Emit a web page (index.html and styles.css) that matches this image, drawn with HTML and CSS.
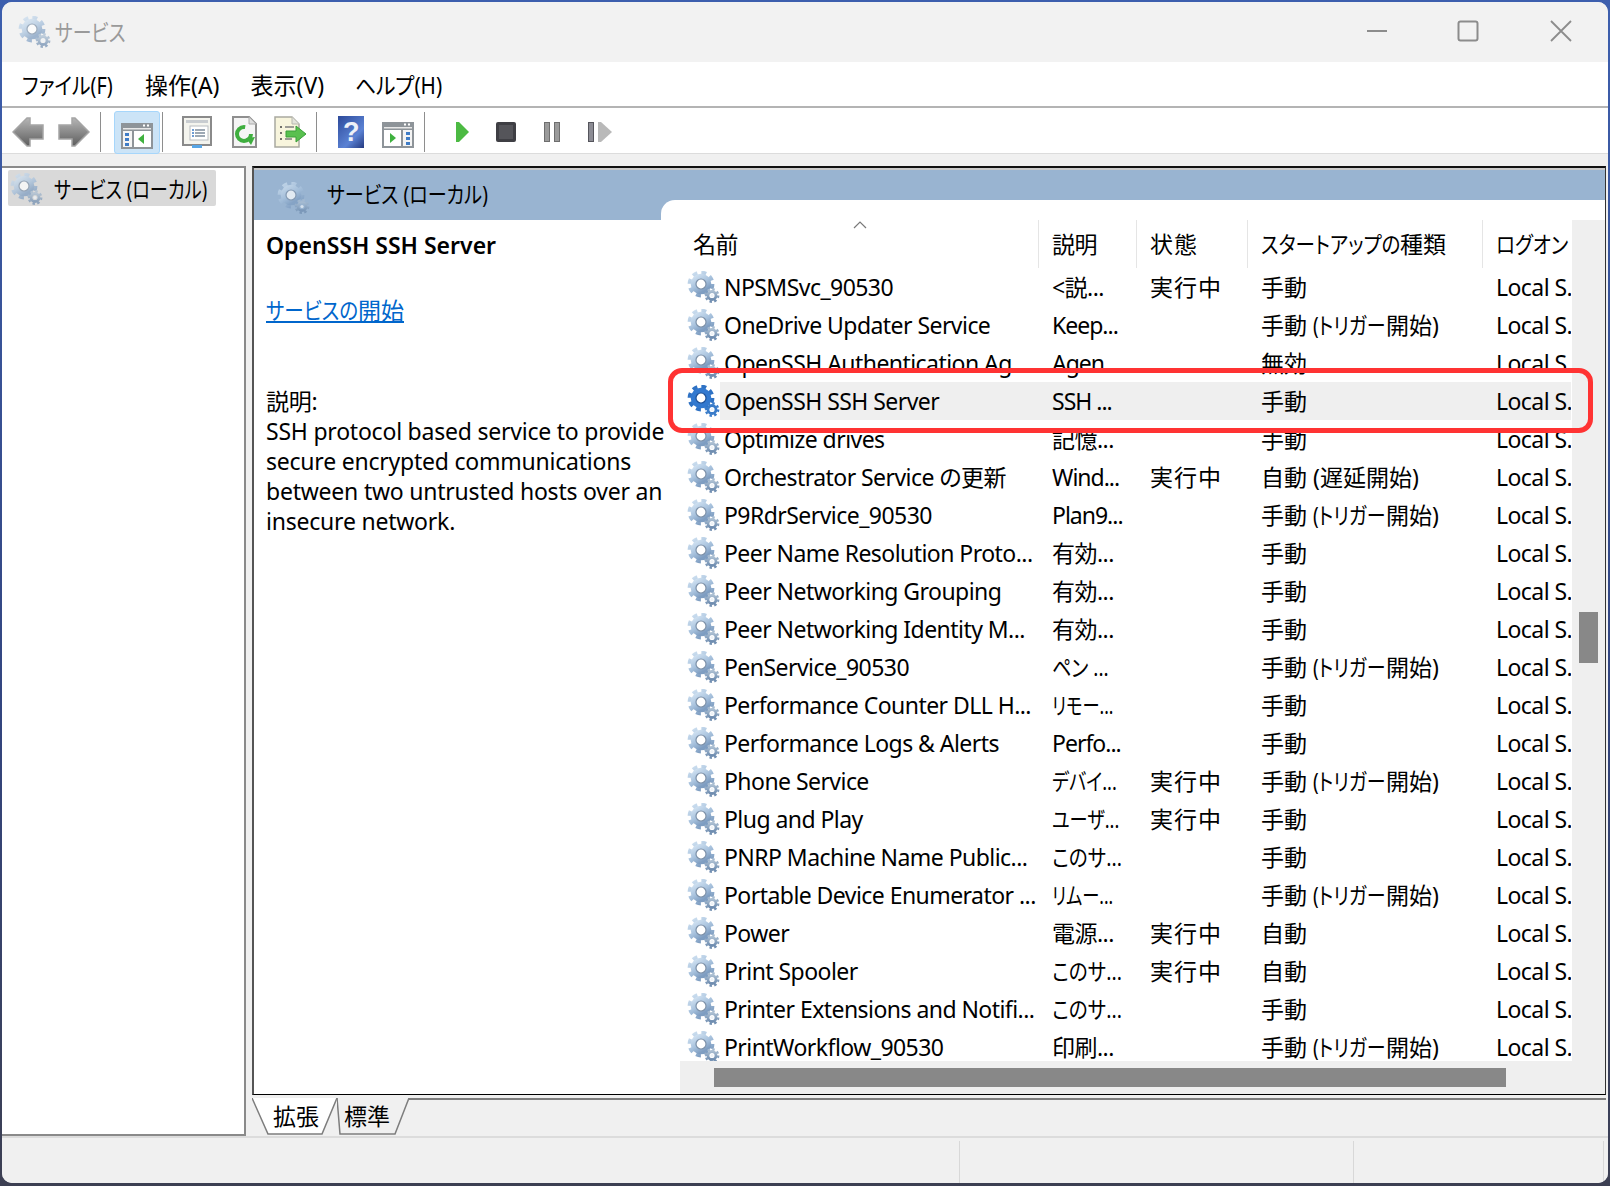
FILE: index.html
```html
<!DOCTYPE html>
<html lang="ja">
<head>
<meta charset="utf-8">
<title>サービス</title>
<link rel="stylesheet" href="styles.css">
</head>
<body>
<svg class="defs" aria-hidden="true">
  <defs>
    <linearGradient id="gearFill" x1="0" y1="0" x2="0.6" y2="1"><stop offset="0" stop-color="#d0e1f1"/><stop offset="0.55" stop-color="#a9c3de"/><stop offset="1" stop-color="#7e9dc1"/></linearGradient>
    <linearGradient id="gearSmall" x1="0" y1="0" x2="0" y2="1"><stop offset="0" stop-color="#a9bdd1"/><stop offset="1" stop-color="#6f8db0"/></linearGradient>
    <linearGradient id="arrowFill" x1="0" y1="0" x2="0" y2="1"><stop offset="0" stop-color="#b5b5b5"/><stop offset="0.5" stop-color="#8a8a8a"/><stop offset="1" stop-color="#5d5d5d"/></linearGradient>
    <symbol id="gear" viewBox="0 0 33 32">
      <circle cx="14" cy="13" r="11.2" fill="none" stroke="url(#gearFill)" stroke-width="4.4" stroke-dasharray="4.8 4"/>
      <circle cx="14" cy="13" r="7.6" fill="none" stroke="url(#gearFill)" stroke-width="5.4"/>
      <circle cx="14" cy="13" r="5" fill="#fff" stroke="#7c90a8" stroke-width="1.2"/>
      <circle cx="25" cy="24.5" r="6.2" fill="none" stroke="url(#gearSmall)" stroke-width="2.4" stroke-dasharray="2.4 2.4"/>
      <circle cx="25" cy="24.5" r="4" fill="none" stroke="url(#gearSmall)" stroke-width="2.8"/>
      <circle cx="25" cy="24.5" r="1.6" fill="#eef3f8"/>
    </symbol>
    <symbol id="gear-sel" viewBox="0 0 33 32">
      <circle cx="14" cy="13" r="11.2" fill="none" stroke="#2f72c4" stroke-width="4.4" stroke-dasharray="4.8 4"/>
      <circle cx="14" cy="13" r="7.6" fill="none" stroke="#3379cf" stroke-width="5.4"/>
      <circle cx="14" cy="13" r="5" fill="#fff" stroke="#1c4f96" stroke-width="1.2"/>
      <circle cx="25" cy="24.5" r="6.2" fill="none" stroke="#3a7cc9" stroke-width="2.4" stroke-dasharray="2.4 2.4"/>
      <circle cx="25" cy="24.5" r="4" fill="none" stroke="#3a7cc9" stroke-width="2.8"/>
      <circle cx="25" cy="24.5" r="1.6" fill="#eef3f8"/>
    </symbol>
  </defs>
</svg>

<div class="window">
  <header class="titlebar">
    <svg class="gear gear-pale title-icon"><use href="#gear"/></svg>
    <span class="title"><span class="sq sq82">サービス</span></span>
    <div class="controls">
      <svg class="ctl" viewBox="0 0 22 22"><path d="M1 11H21" stroke="#8c8c8c" stroke-width="2"/></svg>
      <svg class="ctl ctl-max" viewBox="0 0 22 22"><rect x="1.5" y="1.5" width="19" height="19" rx="2" fill="none" stroke="#8c8c8c" stroke-width="2"/></svg>
      <svg class="ctl ctl-close" viewBox="0 0 22 22"><path d="M1 1L21 21M21 1L1 21" stroke="#8c8c8c" stroke-width="1.8"/></svg>
    </div>
  </header>

  <nav class="menubar">
    <span class="menu menu-file"><span class="sq sq86">ファイル(F)</span></span>
    <span class="menu">操作(A)</span>
    <span class="menu">表示(V)</span>
    <span class="menu"><span class="sq sq90">ヘルプ(H)</span></span>
  </nav>

  <div class="toolbar">
    <svg class="tool t-back" viewBox="0 0 32 30"><path d="M1 15L15 1H18V8H31V22H18V29H15Z" fill="url(#arrowFill)" stroke="#a5a5a5" stroke-width="1.5"/></svg>
    <svg class="tool t-fwd" viewBox="0 0 32 30"><path d="M31 15L17 1H14V8H1V22H14V29H17Z" fill="url(#arrowFill)" stroke="#a5a5a5" stroke-width="1.5"/></svg>
    <span class="sep s1"></span>
    <button class="tool-active">
      <svg class="tool-pane" viewBox="0 0 32 26"><rect width="32" height="26" fill="#8e9499"/><rect x="2" y="5" width="28" height="1.5" fill="#e8e8e8"/><rect x="22" y="1.5" width="2" height="2" fill="#fff"/><rect x="26" y="1.5" width="2" height="2" fill="#fff"/><rect x="2" y="8" width="9" height="16" fill="#f4f4f4"/><rect x="13" y="8" width="17" height="16" fill="#fff"/><rect x="4" y="10" width="4" height="3" fill="#3f7cc6"/><rect x="4" y="15" width="4" height="3" fill="#3f7cc6"/><rect x="4" y="20" width="4" height="3" fill="#3f7cc6"/><path d="M23 11V21L17 16Z" fill="#3fb13f"/></svg>
    </button>
    <span class="sep s2"></span>
    <svg class="tool t-props" viewBox="0 0 30 32"><rect x="1" y="1" width="28" height="28" fill="#f4f4ee" stroke="#8a8a8a" stroke-width="2"/><rect x="4" y="4" width="22" height="3" fill="#c8ccd0"/><rect x="8" y="10" width="18" height="14" fill="#fff" stroke="#b8bcc0"/><path d="M13 14H23M13 17H23M13 20H23" stroke="#7d8c9c" stroke-width="1.5"/><path d="M10 14h2M10 17h2M10 20h2" stroke="#3f7cc6" stroke-width="1.5"/><rect x="10" y="29" width="10" height="3" fill="#58a6e6"/></svg>
    <svg class="tool t-refresh" viewBox="0 0 25 32"><path d="M1 1H17L24 8V31H1Z" fill="#f5f5f5" stroke="#8f8f8f" stroke-width="2"/><path d="M17 1V8H24" fill="#ddd" stroke="#aaa"/><circle cx="12" cy="18" r="7" fill="none" stroke="#3fae3f" stroke-width="4" stroke-dasharray="34 10"/><path d="M14 22L23 21L19 29Z" fill="#3fae3f"/></svg>
    <svg class="tool t-export" viewBox="0 0 32 32"><path d="M1 1H18L25 8V31H1Z" fill="#f8f5dd" stroke="#a9a9a0" stroke-width="1.5"/><path d="M18 1V8H25" fill="#e4e4dc" stroke="#b8b8b0"/><path d="M6 11h2M6 17h2M6 23h2" stroke="#444" stroke-width="1.6"/><path d="M11 11H20M11 23H18" stroke="#7d7d7d" stroke-width="1.6"/><path d="M12 15H22V10L32 18L22 26V21H12Z" fill="#59c04f" stroke="#3a9f3a"/></svg>
    <span class="sep s3"></span>
    <div class="help"><span>?</span></div>
    <svg class="tool t-action" viewBox="0 0 32 26"><rect width="32" height="26" fill="#8e9499"/><rect x="2" y="5" width="28" height="1.5" fill="#e8e8e8"/><rect x="22" y="1.5" width="2" height="2" fill="#fff"/><rect x="26" y="1.5" width="2" height="2" fill="#fff"/><rect x="2" y="8" width="17" height="16" fill="#fff"/><rect x="21" y="8" width="9" height="16" fill="#f4f4f4"/><rect x="24" y="10" width="4" height="3" fill="#3f7cc6"/><rect x="24" y="15" width="4" height="3" fill="#3f7cc6"/><rect x="24" y="20" width="4" height="3" fill="#3f7cc6"/><path d="M8 11V21L14 16Z" fill="#3fb13f"/></svg>
    <span class="sep s4"></span>
    <svg class="tool t-play" viewBox="0 0 13 20"><path d="M0 0H3L13 10L3 20H0Z" fill="#4cba43"/></svg>
    <svg class="tool t-stop" viewBox="0 0 20 20"><rect width="20" height="20" rx="2" fill="#3f3f44"/><rect x="3" y="3" width="14" height="14" fill="#55555a"/></svg>
    <svg class="tool t-pause" viewBox="0 0 16 20"><rect x="0.5" y="0.5" width="5" height="19" fill="#9a9a9a" stroke="#6e6e6e"/><rect x="10.5" y="0.5" width="5" height="19" fill="#9a9a9a" stroke="#6e6e6e"/></svg>
    <svg class="tool t-step" viewBox="0 0 24 20"><rect x="0.5" y="0.5" width="5" height="19" fill="#8c8c94" stroke="#55555c"/><path d="M10 0H13L24 10L13 20H10Z" fill="#b9b9b9"/></svg>
  </div>
  <div class="toolgap"></div>

  <main class="workspace">
    <aside class="tree">
      <div class="tree-item">
        <svg class="gear gear-pale"><use href="#gear"/></svg>
        <span class="tree-label"><span class="sq sq79">サービス (ローカル)</span></span>
      </div>
    </aside>

    <section class="pane">
      <div class="frame">
        <div class="detail">
          <div class="band">
            <svg class="gear gear-pale band-icon"><use href="#gear"/></svg>
            <span class="band-label"><span class="sq sq83">サービス (ローカル)</span></span>
          </div>
          <div class="info">
            <div class="svc-name">OpenSSH SSH Server</div>
            <a class="svc-link" href="#"><span class="sq sq85 w-link">サービスの</span>開始</a>
            <p class="svc-desc">説明:<br>SSH protocol based service to provide<br>secure encrypted communications<br>between two untrusted hosts over an<br>insecure network.</p>
          </div>
        </div>

        <div class="list-col">
          <div class="list-wrap">
            <div class="viewport">
              <div class="row head">
                <span class="c-icon"></span>
                <span class="cell h-name">名前</span>
                <span class="cell h">説明</span>
                <span class="cell h">状態</span>
                <span class="cell h"><span class="sq sq85 w-head">スタートアップの</span>種類</span>
                <span class="cell h"><span class="sq sq85">ログオン</span></span>
                <svg class="sort" viewBox="0 0 14 8"><path d="M1 7L7 1L13 7" fill="none" stroke="#7a7a7a" stroke-width="1.2"/></svg>
              </div>

              <div class="row"><svg class="gear"><use href="#gear"/></svg><span class="cell n">NPSMSvc_90530</span><span class="cell">&lt;説...</span><span class="cell">実行中</span><span class="cell">手動</span><span class="cell">Local S.</span></div>
              <div class="row"><svg class="gear"><use href="#gear"/></svg><span class="cell n">OneDrive Updater Service</span><span class="cell lt">Keep...</span><span class="cell"></span><span class="cell">手動 <span class="sq trig">(トリガー</span>開始)</span><span class="cell">Local S.</span></div>
              <div class="row"><svg class="gear"><use href="#gear"/></svg><span class="cell n">OpenSSH Authentication Ag...</span><span class="cell lt">Agen...</span><span class="cell"></span><span class="cell">無効</span><span class="cell">Local S.</span></div>
              <div class="row selected"><svg class="gear"><use href="#gear-sel"/></svg><span class="cell n">OpenSSH SSH Server</span><span class="cell lt">SSH ...</span><span class="cell"></span><span class="cell">手動</span><span class="cell">Local S.</span></div>
              <div class="row"><svg class="gear"><use href="#gear"/></svg><span class="cell n">Optimize drives</span><span class="cell">記憶...</span><span class="cell"></span><span class="cell">手動</span><span class="cell">Local S.</span></div>
              <div class="row"><svg class="gear"><use href="#gear"/></svg><span class="cell n">Orchestrator Service の更新</span><span class="cell lt">Wind...</span><span class="cell">実行中</span><span class="cell">自動 (遅延開始)</span><span class="cell">Local S.</span></div>
              <div class="row"><svg class="gear"><use href="#gear"/></svg><span class="cell n">P9RdrService_90530</span><span class="cell lt">Plan9...</span><span class="cell"></span><span class="cell">手動 <span class="sq trig">(トリガー</span>開始)</span><span class="cell">Local S.</span></div>
              <div class="row"><svg class="gear"><use href="#gear"/></svg><span class="cell n">Peer Name Resolution Proto...</span><span class="cell">有効...</span><span class="cell"></span><span class="cell">手動</span><span class="cell">Local S.</span></div>
              <div class="row"><svg class="gear"><use href="#gear"/></svg><span class="cell n">Peer Networking Grouping</span><span class="cell">有効...</span><span class="cell"></span><span class="cell">手動</span><span class="cell">Local S.</span></div>
              <div class="row"><svg class="gear"><use href="#gear"/></svg><span class="cell n">Peer Networking Identity M...</span><span class="cell">有効...</span><span class="cell"></span><span class="cell">手動</span><span class="cell">Local S.</span></div>
              <div class="row"><svg class="gear"><use href="#gear"/></svg><span class="cell n">PenService_90530</span><span class="cell"><span class="sq sq83">ペン ...</span></span><span class="cell"></span><span class="cell">手動 <span class="sq trig">(トリガー</span>開始)</span><span class="cell">Local S.</span></div>
              <div class="row"><svg class="gear"><use href="#gear"/></svg><span class="cell n">Performance Counter DLL H...</span><span class="cell"><span class="sq sq75">リモー...</span></span><span class="cell"></span><span class="cell">手動</span><span class="cell">Local S.</span></div>
              <div class="row"><svg class="gear"><use href="#gear"/></svg><span class="cell n">Performance Logs &amp; Alerts</span><span class="cell lt">Perfo...</span><span class="cell"></span><span class="cell">手動</span><span class="cell">Local S.</span></div>
              <div class="row"><svg class="gear"><use href="#gear"/></svg><span class="cell n">Phone Service</span><span class="cell"><span class="sq sq79">デバイ...</span></span><span class="cell">実行中</span><span class="cell">手動 <span class="sq trig">(トリガー</span>開始)</span><span class="cell">Local S.</span></div>
              <div class="row"><svg class="gear"><use href="#gear"/></svg><span class="cell n">Plug and Play</span><span class="cell"><span class="sq sq79">ユーザ...</span></span><span class="cell">実行中</span><span class="cell">手動</span><span class="cell">Local S.</span></div>
              <div class="row"><svg class="gear"><use href="#gear"/></svg><span class="cell n">PNRP Machine Name Public...</span><span class="cell"><span class="sq sq85">このサ...</span></span><span class="cell"></span><span class="cell">手動</span><span class="cell">Local S.</span></div>
              <div class="row"><svg class="gear"><use href="#gear"/></svg><span class="cell n">Portable Device Enumerator ...</span><span class="cell"><span class="sq sq75">リムー...</span></span><span class="cell"></span><span class="cell">手動 <span class="sq trig">(トリガー</span>開始)</span><span class="cell">Local S.</span></div>
              <div class="row"><svg class="gear"><use href="#gear"/></svg><span class="cell n">Power</span><span class="cell">電源...</span><span class="cell">実行中</span><span class="cell">自動</span><span class="cell">Local S.</span></div>
              <div class="row"><svg class="gear"><use href="#gear"/></svg><span class="cell n">Print Spooler</span><span class="cell"><span class="sq sq85">このサ...</span></span><span class="cell">実行中</span><span class="cell">自動</span><span class="cell">Local S.</span></div>
              <div class="row"><svg class="gear"><use href="#gear"/></svg><span class="cell n">Printer Extensions and Notifi...</span><span class="cell"><span class="sq sq85">このサ...</span></span><span class="cell"></span><span class="cell">手動</span><span class="cell">Local S.</span></div>
              <div class="row"><svg class="gear"><use href="#gear"/></svg><span class="cell n">PrintWorkflow_90530</span><span class="cell">印刷...</span><span class="cell"></span><span class="cell">手動 <span class="sq trig">(トリガー</span>開始)</span><span class="cell">Local S.</span></div>
            </div>
            <div class="vscroll"><div class="vthumb"></div></div>
            <div class="hscroll"><div class="hthumb"></div></div>
          </div>
        </div>
      </div>

      <div class="tabs">
        <div class="tab tab-active">
          <svg class="tab-shape" viewBox="0 0 86 38" preserveAspectRatio="none"><path d="M0 0L16 37H70L85 0" fill="#fff" stroke="#7d7d7d" stroke-width="1.5"/></svg>
          <span class="tab-label">拡張</span>
        </div>
        <div class="tab tab-std">
          <svg class="tab-shape" viewBox="0 0 73 38" preserveAspectRatio="none"><path d="M0 0L3 37H58L72 0" fill="#f0f0f0" stroke="#7d7d7d" stroke-width="1.5"/></svg>
          <span class="tab-label">標準</span>
        </div>
      </div>
    </section>
  </main>

  <footer class="statusbar">
    <div class="st st-a"></div>
    <div class="st st-b"></div>
    <div class="st st-c"></div>
  </footer>

  <div class="callout"></div>
</div>
</body>
</html>
```

FILE: styles.css
```css
* { box-sizing: border-box; }

html, body {
  margin: 0;
  height: 100%;
}

body {
  background: linear-gradient(#3d5fae, #33457f 60%, #3c3f52);
  font-family: "Noto Sans", "Noto Sans CJK JP", sans-serif;
  font-size: 23px;
  color: #000;
  font-feature-settings: "palt";
  letter-spacing: -0.55px;
  overflow: hidden;
}

.defs { position: absolute; width: 0; height: 0; }

/* Kana runs: the system UI font draws katakana with narrower glyphs */
.sq {
  display: inline-block;
  letter-spacing: 0;
  white-space: nowrap;
  transform-origin: left center;
}
.sq75 { transform: scaleX(0.75); }
.sq79 { transform: scaleX(0.79); }
.sq82 { transform: scaleX(0.82); }
.sq83 { transform: scaleX(0.83); }
.sq85 { transform: scaleX(0.85); }
.sq86 { transform: scaleX(0.86); }
.sq90 { transform: scaleX(0.9); }
.trig { transform: scaleX(0.825); width: 73px; }
.w-link { width: 92px; text-decoration: underline; }
.w-head { width: 139px; }
.lt { letter-spacing: -1px; }

.window {
  position: relative;
  width: 1606px;
  height: 1181px;
  margin: 2px 0 0 2px;
  border-radius: 10px;
  overflow: hidden;
  background: #f0f0f0;
  display: flex;
  flex-direction: column;
}

.gear { width: 33px; height: 32px; flex: none; }
.gear-pale { opacity: 0.72; }

/* Title bar */
.titlebar {
  height: 60px;
  background: #f2f2f2;
  display: flex;
  align-items: center;
  flex: none;
}
.title-icon { margin-left: 16px; }
.title { margin-left: 4px; color: #9a9a9a; font-size: 23px; line-height: 60px; }
.controls { margin-left: auto; display: flex; align-items: center; }
.ctl { width: 22px; height: 22px; margin-right: 69px; margin-top: -2px; }
.ctl:first-child { margin-right: 69px; }
.ctl-max { margin-right: 71px; }
.ctl-close { margin-right: 36px; }

/* Menu */
.menubar {
  height: 46px;
  flex: none;
  background: #fff;
  border-bottom: 2px solid #b4b4b4;
  display: flex;
  align-items: center;
  padding: 2px 0 0 20px;
  gap: 31px;
}
.menu { line-height: 42px; white-space: nowrap; letter-spacing: 0; }
.menu-file { width: 92px; }

/* Toolbar */
.toolbar {
  height: 46px;
  flex: none;
  background: #fff;
  border-bottom: 1px solid #dcdcdc;
  display: flex;
  align-items: center;
  padding: 3px 0 0 10px;
}
.toolgap { height: 12px; flex: none; }
.tool { flex: none; display: block; }
.sep { width: 1px; height: 40px; background: #8e8e8e; flex: none; }
.t-back { width: 32px; height: 30px; }
.t-fwd { width: 32px; height: 30px; margin-left: 14px; }
.s1 { margin-left: 10px; }
.tool-active {
  width: 46px;
  height: 43px;
  margin: 0 0 0 13px;
  padding: 7px 0 0 0;
  background: #cce4f7;
  border: 1px solid #a6d6fb;
  border-radius: 3px;
  display: flex;
  justify-content: center;
  align-items: center;
  flex: none;
}
.tool-pane { width: 32px; height: 26px; display: block; }
.s2 { margin-left: 2px; }
.t-props { width: 30px; height: 32px; margin-left: 19px; }
.t-refresh { width: 25px; height: 32px; margin-left: 20px; }
.t-export { width: 32px; height: 32px; margin-left: 17px; }
.s3 { margin-left: 10px; }
.help {
  width: 26px;
  height: 32px;
  margin-left: 21px;
  background: linear-gradient(135deg, #2d4a9a, #5b82d4 65%, #24397f);
  display: flex;
  align-items: center;
  justify-content: center;
  flex: none;
}
.help span {
  font-family: "Liberation Sans", sans-serif;
  font-weight: 700;
  font-size: 27px;
  line-height: 32px;
  color: #eef1f8;
}
.t-action { width: 32px; height: 26px; margin: 5px 0 0 18px; }
.s4 { margin-left: 10px; }
.t-play { width: 13px; height: 20px; margin-left: 31px; }
.t-stop { width: 20px; height: 20px; margin-left: 27px; }
.t-pause { width: 16px; height: 20px; margin-left: 28px; }
.t-step { width: 24px; height: 20px; margin-left: 28px; }

/* Workspace */
.workspace {
  flex: 1;
  display: flex;
  min-height: 0;
  gap: 6px;
}
.tree {
  width: 244px;
  flex: none;
  background: #fff;
  border-top: 2px solid #8a8a8a;
  border-right: 2px solid #8a8a8a;
  border-bottom: 2px solid #8a8a8a;
  padding: 2px 28px 0 6px;
}
.tree-item {
  height: 36px;
  background: #d9d9d9;
  border-radius: 2px;
  display: flex;
  align-items: center;
}
.tree-item .gear { margin: 2px 0 0 2px; }
.tree-label { margin-left: 11px; white-space: nowrap; width: 152px; }

.pane {
  width: 1354px;
  flex: none;
  display: flex;
  flex-direction: column;
}
.frame {
  height: 929px;
  flex: none;
  background: #c8c8c8;
  border-top: 2px solid #111;
  border-bottom: 1px solid #000;
  border-left: 2px solid #555;
  border-right: 1px solid #333;
  padding-top: 2px;
  display: grid;
  grid-template-columns: 407px 944px;
}

.detail { background: #fff; min-width: 0; }
.band {
  height: 50px;
  background: #99b4d1;
  display: flex;
  align-items: center;
  padding-left: 23px;
}
.band-icon { margin-top: 6px; }
.band-label { margin: -4px 0 0 17px; white-space: nowrap; }
.info { position: relative; z-index: 1; padding: 10px 0 0 12px; line-height: 30px; }
.svc-name { font-weight: 600; white-space: nowrap; letter-spacing: 0; }
.svc-link {
  display: block;
  margin-top: 35px;
  color: #0066cc;
  text-decoration: underline;
  width: max-content;
  letter-spacing: 0;
}
.svc-desc { margin: 61px 0 0; white-space: nowrap; letter-spacing: -0.22px; }

.list-col {
  background: linear-gradient(#99b4d1 50px, #fff 50px);
  padding-top: 30px;
  min-width: 0;
}
.list-wrap {
  height: 894px;
  background: #fff;
  border-top-left-radius: 14px;
  padding: 20px 0 0 19px;
  display: grid;
  grid-template-columns: 892px 33px;
  grid-template-rows: 841px 33px;
}
.viewport { overflow: hidden; min-width: 0; background: #fff; }

.row {
  display: grid;
  grid-template-columns: 40px 319px 98px 111px 235px 88px;
  height: 38px;
  align-items: center;
  line-height: 38px;
}
.row .gear { margin-left: 7px; }
.cell {
  display: block;
  overflow: hidden;
  white-space: nowrap;
  padding-left: 13px;
  height: 100%;
}
.cell.n { padding-left: 4px; }
.row .cell:nth-child(4) { letter-spacing: 1px; }
.row .cell:nth-child(5) { letter-spacing: 0; }
.row.selected .cell { background: #efefef; }

.head { position: relative; height: 48px; line-height: 48px; }
.head .cell { border-right: 1px solid #e5e5e5; }
.head .cell:last-of-type { border-right: 0; }
.head .h-name { margin-left: -27px; padding-left: 0; width: calc(100% + 27px); }
.sort { position: absolute; left: 173px; top: 1px; width: 14px; height: 8px; }

.vscroll { background: #efefef; padding: 392px 7px 0; }
.vthumb { height: 51px; background: #888; }
.hscroll {
  grid-column: 1 / 3;
  background: #efefef;
  padding: 7px 0 0 34px;
}
.hthumb { width: 792px; height: 19px; background: #888; }

/* Tabs */
.tabs {
  flex: 1;
  display: flex;
  margin-top: 3px;
  border-top: 2px solid #7d7d7d;
  align-items: stretch;
}
.tab { position: relative; height: 37px; flex: none; margin-top: -2px; }
.tab-active { width: 86px; z-index: 1; }
.tab-std { width: 73px; margin-left: -1px; }
.tab-shape { position: absolute; left: 0; top: 0; width: 100%; height: 100%; }
.tab-label { position: relative; display: block; line-height: 37px; letter-spacing: 0; }
.tab-active .tab-label { padding-left: 21px; }
.tab-std .tab-label { padding-left: 7px; }

/* Status */
.statusbar {
  height: 47px;
  flex: none;
  border-top: 2px solid #dcdcdc;
  background: #f0f0f0;
  display: flex;
  padding-top: 3px;
}
.st { border-right: 1px solid #d8d8d8; }
.st-a { width: 958px; }
.st-b { width: 394px; }
.st-c { width: 250px; }

/* Red annotation */
.callout {
  position: absolute;
  left: 666px;
  top: 366px;
  width: 925px;
  height: 65px;
  border: 5px solid #ff3333;
  border-radius: 14px;
}
```
